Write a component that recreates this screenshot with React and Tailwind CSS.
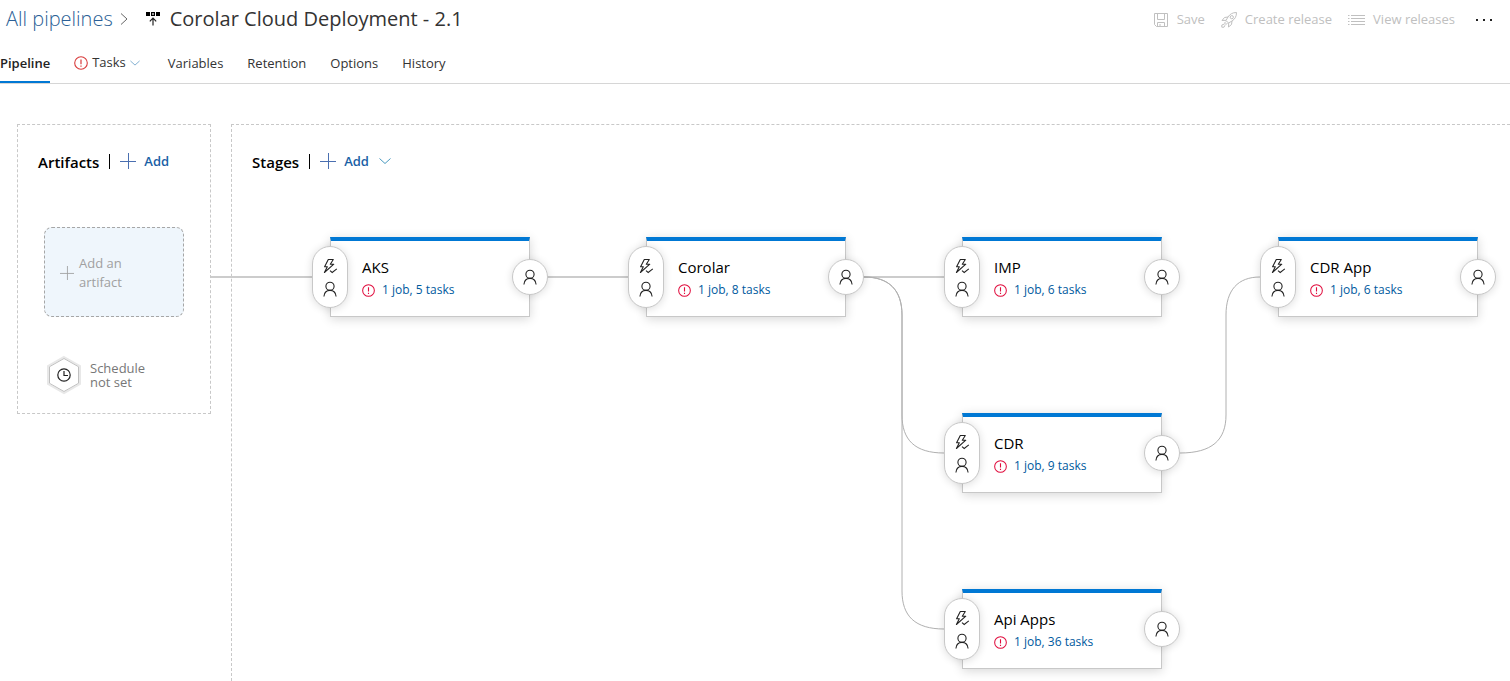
const stages = [
  { name: "AKS", tasks: "1 job, 5 tasks", place: "left-[330px] top-[153px]" },
  { name: "Corolar", tasks: "1 job, 8 tasks", place: "left-[646px] top-[153px]" },
  { name: "IMP", tasks: "1 job, 6 tasks", place: "left-[962px] top-[153px]" },
  { name: "CDR App", tasks: "1 job, 6 tasks", place: "left-[1278px] top-[153px]" },
  { name: "CDR", tasks: "1 job, 9 tasks", place: "left-[962px] top-[329px]" },
  { name: "Api Apps", tasks: "1 job, 36 tasks", place: "left-[962px] top-[505px]" },
];

function Svg({ className, box = "0 0 16 16", children }) {
  return (
    <svg viewBox={box} className={`shrink-0 ${className}`} fill="none" stroke="currentColor" aria-hidden="true">
      {children}
    </svg>
  );
}

function Alert({ className }) {
  return (
    <Svg className={className} box="0 0 14 14">
      <circle cx="7" cy="7" r="6.3" strokeWidth="1.1" />
      <path d="M7 3.4v4.8M7 9.5v1.2" strokeWidth="1.2" />
    </Svg>
  );
}

function Person() {
  return (
    <Svg className="size-4 text-[#222]">
      <circle cx="8" cy="5.3" r="4.1" strokeWidth="1.1" />
      <path d="M1.900 15.500c.3-3.800 2.700-6.100 6.100-6.100s5.800 2.300 6.100 6.100" strokeWidth="1.1" />
    </Svg>
  );
}

function Trigger() {
  return (
    <Svg className="size-4 text-[#222]">
      <path d="M6.300 1.500h5L8.300 6.200h3.500L2.400 14.500l2.900-5.700H2.600z" strokeWidth="1.100" strokeLinejoin="round" />
      <path d="M8 12.600l2.200 1.900 4.600-3.600" strokeWidth="1.100" />
    </Svg>
  );
}

function Plus({ className }) {
  return (
    <Svg className={className}>
      <path d="M8.500 0v16M0 8.500h16" />
    </Svg>
  );
}

function Chevron({ className }) {
  return (
    <Svg className={className} box="0 0 12 8">
      <path d="M.5 1.500l5.500 5 5.500-5" />
    </Svg>
  );
}

function Stage({ name, tasks, place }) {
  return (
    <article className={`absolute h-20 w-[200px] border border-t-4 border-[#c8c8c8] border-t-[#0078d4] bg-white pl-[31px] pt-[15px] shadow-[0_2px_10px_rgba(0,0,0,0.16)] ${place}`}>
      <h3 className="text-[15px] leading-[22px] text-black">{name}</h3>
      <a href="#tasks" className="flex items-center gap-[7px] text-xs leading-6 text-[#005a9e]">
        <Alert className="size-[13px] text-[#e00b3c]" />
        {tasks}
      </a>
      <button aria-label={`${name} pre-deployment conditions`} className="absolute -left-[19px] top-[5px] flex h-[62px] w-9 flex-col items-center justify-center gap-[7px] rounded-full border border-[#c8c8c8] bg-white shadow-[0_1px_8px_rgba(0,0,0,0.14)]">
        <Trigger />
        <Person />
      </button>
      <button aria-label={`${name} post-deployment conditions`} className="absolute -right-[19px] top-[18px] flex size-9 items-center justify-center rounded-full border border-[#c8c8c8] bg-white shadow-[0_1px_8px_rgba(0,0,0,0.14)]">
        <Person />
      </button>
    </article>
  );
}

function Header() {
  return (
    <header className="flex h-[38px] items-center justify-between pl-1.5 pr-4">
      <div className="flex items-center text-xl leading-7">
        <a href="#pipelines" className="font-light text-[#2b5f96]">All pipelines</a>
        <Svg className="ml-[7px] h-3 w-2 text-[#666]" box="0 0 8 12">
          <path d="M1 .5l6 5.500-6 5.500" />
        </Svg>
        <Svg className="ml-[17px] size-4 text-[#222]">
          <path d="M1 1h4v4H1zM11 1h4v4h-4z" fill="#000" stroke="none" />
          <path d="M6.600 1.600h2.800v2.800H6.600z" stroke="#000" strokeWidth="1.200" />
          <path d="M8 14.500V7.500M4.800 10.300L8 7.100l3.200 3.200" strokeWidth="1.200" />
        </Svg>
        <h1 className="ml-[9px] text-[#333]">Corolar Cloud Deployment - 2.1</h1>
      </div>
      <div className="flex items-center gap-4 pt-0.5 text-[13px] text-[#c0c0c0]">
        <button className="flex items-center gap-2">
          <Svg className="size-4">
            <path d="M1.500 1.500h13v13h-11l-2-2zM4.500 1.500v6h7v-6M4.500 14.500v-4h7v4M7 12v2.500" />
          </Svg>
          Save
        </button>
        <button className="flex items-center gap-2">
          <Svg className="size-4">
            <path d="M15.500.5c-4 0-6.500 1.500-8.500 4.500l-2 3.500 2.500 2.500L11 9c3-2 4.500-4.500 4.500-8.500zM7 5L3.500 5.500 1 8.500l4-.2M11 9l-.5 3.500-3 2.500.2-4M5 9.500L3.500 11 5 12.500 6.500 11M3.500 12L.8 13v2.200H3l1-2" />
            <circle cx="10.800" cy="5.200" r="1.600" />
          </Svg>
          Create release
        </button>
        <button className="flex items-center gap-2">
          <Svg className="h-4 w-[17px]" box="0 0 17 16">
            <path d="M3 3.500h14M3 6.500h14M3 9.500h14M3 12.500h14M0 3.500h1.500M0 6.500h1.500M0 9.500h1.500M0 12.500h1.500" />
          </Svg>
          View releases
        </button>
        <button aria-label="More actions" className="ml-[3px] text-[#222]">
          <Svg className="size-5" box="0 0 20 20">
            <path d="M2 10h2M9 10h2M16 10h2" strokeWidth="2" />
          </Svg>
        </button>
      </div>
    </header>
  );
}

function Tabs() {
  return (
    <nav className="flex h-[46px] items-stretch gap-6 border-b border-[#d6d6d6] text-[13px] text-[#333]">
      <a href="#pipeline" className="flex items-center border-b-2 border-[#0078d4] pt-2 font-semibold text-[#222]">Pipeline</a>
      <a href="#tasks" className="flex items-center gap-1 pt-1">
        <Alert className="size-3.5 text-[#d83b3b]" />
        Tasks
        <Chevron className="h-2 w-2.5 text-[#6aa0c8]" />
      </a>
      <a href="#variables" className="ml-1 flex items-center pt-1.5">Variables</a>
      <a href="#retention" className="flex items-center pt-1.5">Retention</a>
      <a href="#options" className="flex items-center pt-1.5">Options</a>
      <a href="#history" className="flex items-center pt-1.5">History</a>
    </nav>
  );
}

function SectionTitle({ title, chevron }) {
  return (
    <div className="flex items-start pl-5 pt-[25px]">
      <h2 className="text-[15px] font-semibold leading-6 text-black">{title}</h2>
      <span className="ml-2.5 mt-1 h-[15px] w-px bg-black" />
      <button className="ml-2.5 flex items-center gap-2 text-[13px] font-semibold leading-[22px] text-[#1a5fa5]">
        <Plus className="size-4 text-[#4a6fb0]" />
        Add
        {chevron && <Chevron className="ml-0.5 h-2 w-3 text-[#4a9ac0]" />}
      </button>
    </div>
  );
}

export default function App() {
  return (
    <div className="flex min-h-screen flex-col overflow-hidden bg-white font-['Open_Sans','Noto_Sans',sans-serif]">
      <Header />
      <Tabs />
      <main className="relative flex min-h-[597px] flex-1 items-start gap-5 pl-[17px] pt-10">
        <section className="h-[290px] w-[194px] shrink-0 border border-dashed border-[#c8c8c8]">
          <SectionTitle title="Artifacts" />
          <button className="ml-[26px] mt-[53px] flex h-[90px] w-[140px] items-center gap-[5px] rounded-lg border border-dashed border-[#a6a6a6] bg-[#eff6fc] pl-[15px] pt-0.5 text-left text-[13px] leading-[19px] text-[#a0a0a0]">
            <Plus className="size-3.5" />
            <span className="w-14">Add an artifact</span>
          </button>
          <button className="ml-7 mt-[38px] flex items-center gap-2 text-left text-[13px] leading-3.5 text-[#777]">
            <Svg className="h-10 w-9" box="0 0 36 40">
              <path d="M18 2l16 9v18l-16 9-16-9V11z" stroke="#e8e8e8" strokeWidth="2" />
              <path d="M18 3.500l14.500 8.200v16.600L18 36.500 3.500 28.300V11.700z" stroke="#c0c0c0" fill="#fff" />
              <circle cx="18" cy="20" r="6.200" stroke="#222" strokeWidth="1.200" />
              <path d="M18 16v4.500h4" stroke="#222" strokeWidth="1.200" />
            </Svg>
            <span className="w-16">Schedule not set</span>
          </button>
        </section>
        <section className="min-w-0 flex-1 self-stretch border-l border-t border-dashed border-[#c8c8c8]">
          <SectionTitle title="Stages" chevron />
        </section>
        <svg className="pointer-events-none absolute left-0 top-0 h-[597px] w-[1510px]" viewBox="0 0 1510 597" fill="none" stroke="#b0b0b0" aria-hidden="true">
          <path d="M211 193h120M530 193h116M846 193h116" stroke="#cccccc" strokeWidth="2" />
          <path d="M864 193c25 0 38 13 38 38v100c0 25 13 38 42 38M864 193c25 0 38 13 38 38v276c0 25 13 38 42 38M1180 369c32 0 46-13 46-38v-100c0-25 12-38 34-38" />
        </svg>
        {stages.map((stage) => (
          <Stage key={stage.name} {...stage} />
        ))}
      </main>
    </div>
  );
}
